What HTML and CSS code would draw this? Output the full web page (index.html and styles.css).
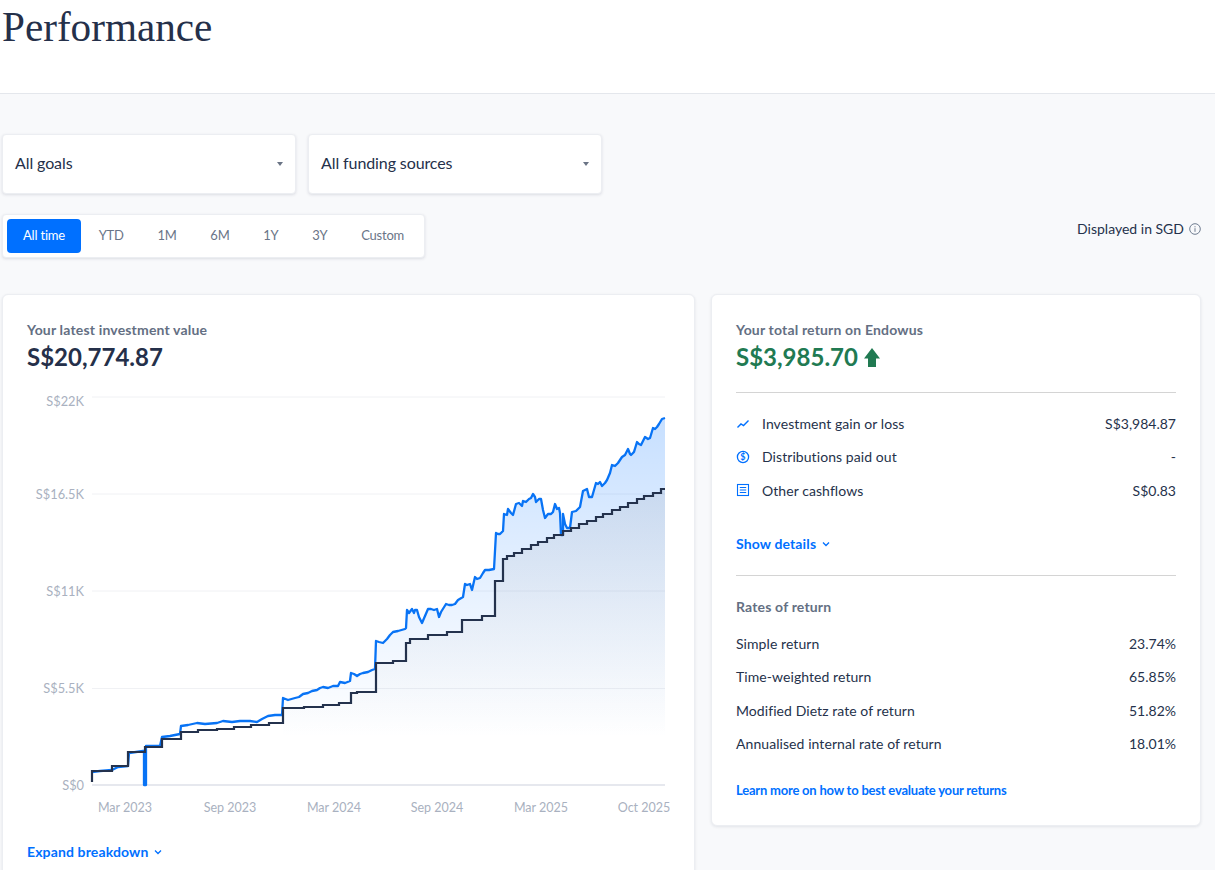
FILE: index.html
```html
<!DOCTYPE html>
<html lang="en">
<head>
<meta charset="utf-8">
<title>Performance</title>
<link rel="stylesheet" href="styles.css">
</head>
<body>
<header class="page-header"><h1 class="page-title">Performance</h1></header>
<main class="content">
  <div class="filters">
    <div class="select"><span>All goals</span><i class="caret"></i></div>
    <div class="select"><span>All funding sources</span><i class="caret"></i></div>
  </div>
  <div class="toolbar">
    <div class="ranges">
      <span class="range active">All time</span>
      <span class="range">YTD</span>
      <span class="range">1M</span>
      <span class="range">6M</span>
      <span class="range">1Y</span>
      <span class="range">3Y</span>
      <span class="range">Custom</span>
    </div>
    <div class="currency">Displayed in SGD
      <svg class="info" viewBox="0 0 12 12" width="12" height="12"><circle cx="6" cy="6" r="5.3" fill="none" stroke="#6f7c90" stroke-width="1"/><rect x="5.5" y="5.2" width="1" height="3.6" fill="#6f7c90"/><rect x="5.5" y="3.2" width="1" height="1.1" fill="#6f7c90"/></svg>
    </div>
  </div>
  <div class="cards">
    <section class="card">
      <div class="label">Your latest investment value</div>
      <div class="amount">S$20,774.87</div>
      <svg class="chart" viewBox="27 390 643 430" width="643" height="430">
        <defs>
          <linearGradient id="gBlue" gradientUnits="userSpaceOnUse" x1="0" y1="418" x2="0" y2="738">
            <stop offset="0" stop-color="#0070ff" stop-opacity=".22"/>
            <stop offset=".6" stop-color="#0070ff" stop-opacity=".08"/>
            <stop offset="1" stop-color="#0070ff" stop-opacity="0"/>
          </linearGradient>
          <linearGradient id="gDark" gradientUnits="userSpaceOnUse" x1="0" y1="489" x2="0" y2="738">
            <stop offset="0" stop-color="#3a3030" stop-opacity=".075"/>
            <stop offset="1" stop-color="#3a3030" stop-opacity="0"/>
          </linearGradient>
        </defs>
        <g class="grid">
          <line x1="92" x2="665" y1="397" y2="397"/>
          <line x1="92" x2="665" y1="494" y2="494"/>
          <line x1="92" x2="665" y1="591" y2="591"/>
          <line x1="92" x2="665" y1="688.5" y2="688.5"/>
        </g>
        <line class="baseline" x1="92" x2="665" y1="785" y2="785"/>
        <g class="ylabels">
          <text x="84" y="406">S$22K</text>
          <text x="84" y="499">S$16.5K</text>
          <text x="84" y="596">S$11K</text>
          <text x="84" y="693">S$5.5K</text>
          <text x="84" y="790">S$0</text>
        </g>
        <g class="xlabels">
          <text x="125" y="811">Mar 2023</text>
          <text x="230" y="811">Sep 2023</text>
          <text x="334" y="811">Mar 2024</text>
          <text x="437" y="811">Sep 2024</text>
          <text x="541" y="811">Mar 2025</text>
          <text x="644" y="811">Oct 2025</text>
        </g>
        <path fill="url(#gBlue)" d="M283 785V698L295 698L303 694L317 690L323 687L338 686L340 682L350 681L351 673L357 676L363 673L375 669L376 641L383 643L393 632L405 629L407 610L412 609L417 610L422 623L428 609L437 609L439 617L446 604L452 605L458 600L463 597L465 584L470 584L472 590L475 577L480 578L485 570L494 569L496 533L498 534L503 531L504 514L507 515L508 509L513 515L516 504L522 506L523 501L529 499L533 494L536 502L541 499L545 518L548 514L553 512L555 504L559 508L560 513L561 535L563 535L563 514L567 528L570 528L572 512L580 507L583 491L587 489L589 497L592 497L596 483L600 482L602 486L607 480L612 465L618 463L622 457L628 449L631 455L637 442L641 445L645 437L650 438L653 428L657 427L662 419L665 418V785Z"/>
        <path fill="url(#gDark)" d="M283 785V708H304V707H323V705H339V703H351V693H357V692H376V663H393V661H406V643H410V639H428V635H447V632H462V620H482V616H495V581H503V559H507V556H514V553H522V549H531V545H538V542H547V538H554V535H563V531H571V528H579V524H587V521H596V517H603V514H612V510H620V507H628V503H637V499H644V496H653V493H661V489H665V785Z"/>
        <path class="line-blue" d="M92 772L100 771L112 770L118 767L128 766L129 753L143 751L144 751V785H146V746L155 746L160 746L162 737L170 736L180 734L181 726L188 725L197 723L205 724L217 723L223 721L232 722L240 721L250 721L257 722L262 719L268 716L275 715L282 715L283 698L288 700L295 698L299 697L303 694L308 693L312 691L317 690L320 688L323 687L328 688L333 686L338 686L340 682L345 683L350 681L351 673L354 674L357 676L360 674L363 673L368 672L372 670L375 669L376 641L379 642L383 643L387 639L390 635L393 632L398 631L405 629L406 628L407 610L409 613L412 609L414 613L415 610L417 610L419 617L422 623L425 616L428 609L431 609L434 610L437 609L439 617L441 612L446 604L449 605L452 605L455 604L458 600L463 597L465 584L467 585L470 584L472 590L475 577L477 579L480 578L483 573L485 570L489 570L494 569L496 533L498 534L500 534L503 531L504 514L507 515L508 509L511 513L513 515L516 504L519 503L522 506L523 501L526 502L529 499L531 498L533 494L535 497L536 502L539 499L541 499L543 510L545 518L548 514L551 514L553 512L555 504L557 509L559 508L560 513L561 535L563 535L563 514L565 524L567 528L570 528L572 512L576 511L580 507L583 491L585 490L587 489L589 497L592 497L594 490L596 483L598 484L600 482L602 486L605 483L607 480L610 473L612 465L615 466L618 463L620 460L622 457L625 455L628 449L630 454L631 455L634 452L637 442L639 444L641 445L643 441L645 437L648 439L650 438L653 428L655 429L657 427L659 424L662 419L665 418"/>
        <path class="line-dark" d="M92 782V771H112V766H128V752H145V747H162V739H181V732H198V730H217V729H234V727H251V725H269V723H283V708H304V707H323V705H339V703H351V693H357V692H376V663H393V661H406V643H410V639H428V635H447V632H462V620H482V616H495V581H503V559H507V556H514V553H522V549H531V545H538V542H547V538H554V535H563V531H571V528H579V524H587V521H596V517H603V514H612V510H620V507H628V503H637V499H644V496H653V493H661V489H665"/>
      </svg>
      <a class="link toggle-left">Expand breakdown <svg class="chev" viewBox="0 0 10 10" width="10" height="10"><path d="M2 3.5L5 6.5L8 3.5" fill="none" stroke="#0070ff" stroke-width="1.3"/></svg></a>
    </section>
    <section class="card side">
      <div class="label">Your total return on Endowus</div>
      <div class="amount green">S$3,985.70
        <svg class="up" viewBox="0 0 16 19" width="16" height="19"><path d="M8 0L16 10.5H12V19H4V10.5H0Z" fill="#217a52"/></svg>
      </div>
      <hr class="rule first">
      <div class="row"><span class="row-name"><svg class="ico" viewBox="0 0 14 14" width="14" height="14"><path d="M1.5 10.5L5 7L7.5 8.5L12.5 3.5" fill="none" stroke="#0070ff" stroke-width="1.4"/></svg>Investment gain or loss</span><span>S$3,984.87</span></div>
      <div class="row"><span class="row-name"><svg class="ico" viewBox="0 0 14 14" width="14" height="14"><circle cx="7" cy="7" r="5.6" fill="none" stroke="#0070ff" stroke-width="1.3"/><text class="dollar" x="7" y="10">$</text></svg>Distributions paid out</span><span>-</span></div>
      <div class="row"><span class="row-name"><svg class="ico" viewBox="0 0 14 14" width="14" height="14"><rect x="1.5" y="1.5" width="11" height="11" fill="none" stroke="#0070ff" stroke-width="1.1"/><path d="M3.8 4.5H10.2M3.8 7H10.2M3.8 9.5H10.2" stroke="#0070ff" stroke-width="1"/></svg>Other cashflows</span><span>S$0.83</span></div>
      <a class="link details">Show details <svg class="chev" viewBox="0 0 10 10" width="10" height="10"><path d="M2 3.5L5 6.5L8 3.5" fill="none" stroke="#0070ff" stroke-width="1.3"/></svg></a>
      <hr class="rule">
      <div class="label rates">Rates of return</div>
      <div class="row"><span>Simple return</span><span>23.74%</span></div>
      <div class="row"><span>Time-weighted return</span><span>65.85%</span></div>
      <div class="row"><span>Modified Dietz rate of return</span><span>51.82%</span></div>
      <div class="row"><span>Annualised internal rate of return</span><span>18.01%</span></div>
      <a class="link learn">Learn more on how to best evaluate your returns</a>
    </section>
  </div>
</main>
</body>
</html>
```
FILE: styles.css
```css
html, body { margin: 0; padding: 0; height: 870px; overflow: hidden; }
body { background: #f8f9fb; font-family: Lato, "Liberation Sans", sans-serif; color: #25324b; }
.page-header { height: 93px; background: #fff; border-bottom: 1px solid #e4e7ec; box-sizing: content-box; }
.page-title { margin: 0 0 0 2px; font: 400 41.2px/54px "Liberation Serif", serif; color: #25304a; }
.content { padding: 40px 14px 0 2px; }
.filters { display: flex; gap: 12px; }
.select { width: 294px; height: 60px; box-sizing: border-box; padding: 0 12px 3px; display: flex; align-items: center; justify-content: space-between; background: #fff; border: 1px solid #eceef2; border-radius: 4px; box-shadow: 0 1px 3px rgba(30,40,70,.13); font-size: 16px; letter-spacing: -.1px; color: #25304a; }
.caret { width: 0; height: 0; border: 3.5px solid transparent; border-top: 4px solid #6a7485; border-bottom: 0; margin-top: 3px; }
.toolbar { display: flex; justify-content: space-between; margin-top: 20px; }
.ranges { display: flex; gap: 1.7px; height: 44px; box-sizing: border-box; padding: 4px; align-items: stretch; background: #fff; border: 1px solid #eceef2; border-radius: 4px; box-shadow: 0 1px 3px rgba(30,40,70,.13); }
.range { display: flex; align-items: center; padding: 0 16px 2px; font-size: 13px; letter-spacing: -.2px; color: #6a7588; border-radius: 4px; }
.range.active { background: #0070ff; color: #fff; }
.currency { display: flex; align-items: center; gap: 5px; height: 29px; font-size: 14px; color: #25324b; }
.cards { display: grid; grid-template-columns: 693px 490px; gap: 16px; margin-top: 36px; align-items: start; }
.card { box-sizing: border-box; padding: 24px; background: #fff; border: 1px solid #eceef2; border-radius: 6px; box-shadow: 0 1px 3px rgba(30,40,70,.1); }
.label { font-size: 14px; letter-spacing: .17px; line-height: 22px; font-weight: 700; color: #646f83; }
.amount { font-size: 24px; line-height: 32px; font-weight: 700; color: #25304a; display: flex; align-items: center; gap: 6px; }
.green { color: #217a52; }
.chart { display: block; margin-top: 17px; }
.grid line { stroke: #f0f1f4; stroke-width: 1; }
.baseline { stroke: #e6e8ee; stroke-width: 2; }
.ylabels text { font-size: 12.8px; fill: #a9b1c0; text-anchor: end; }
.xlabels text { font-size: 12.5px; fill: #a9b1c0; text-anchor: middle; transform: translateY(1px); }
.line-blue { fill: none; stroke: #0873f5; stroke-width: 2.3; stroke-linejoin: round; }
.line-dark { fill: none; stroke: #24324d; stroke-width: 2.2; }
.link { display: flex; align-items: center; gap: 5px; font-size: 14px; letter-spacing: .13px; font-weight: 700; color: #0070ff; }
.toggle-left { margin-top: 23px; }
.rule { border: 0; border-top: 1px solid #d4d4d4; margin: 0; }
.rule.first { margin: 19px 0 14px; }
.row { display: flex; justify-content: space-between; align-items: center; height: 33.3px; font-size: 14px; color: #25324b; }
.row > span:first-child { letter-spacing: .07px; }
.row-name { display: flex; align-items: center; gap: 12px; }
.dollar { font-size: 9px; font-weight: 700; fill: #0070ff; text-anchor: middle; }
.details { margin-top: 27px; line-height: 20px; margin-bottom: 21px; }
.rates { margin-top: 20px; margin-bottom: 9px; }
.learn { margin-top: 20px; font-size: 13px; line-height: 21px; letter-spacing: -.21px; }
```
